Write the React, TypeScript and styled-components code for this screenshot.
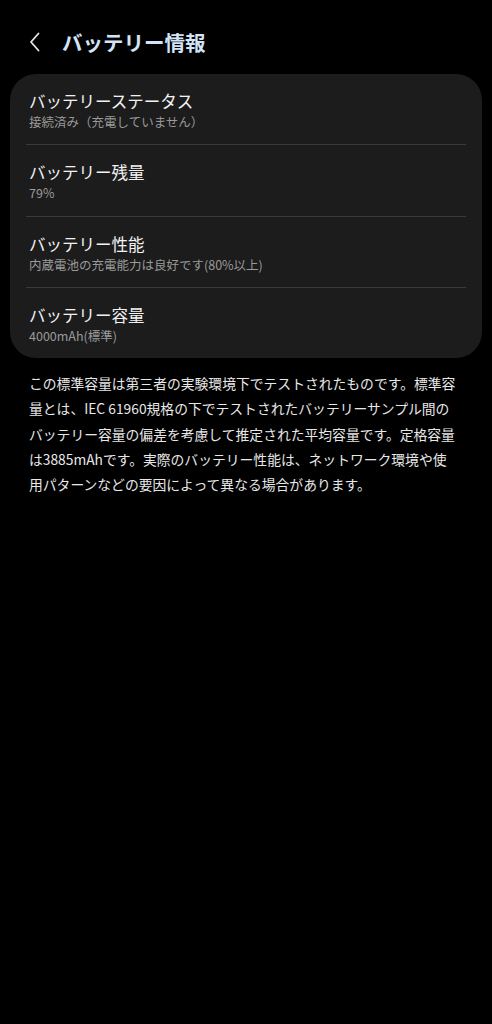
import * as React from 'react';
import styled, {createGlobalStyle} from 'styled-components';

const GlobalStyle = createGlobalStyle`
    html, body {
        margin: 0;
        padding: 0;
        background: #000000;
    }
    body {
        font-family: 'Noto Sans CJK JP', 'Noto Sans', sans-serif;
        -webkit-font-smoothing: antialiased;
    }
`;

interface InfoItem {
    title: string;
    value: string;
}

const items: InfoItem[] = [
    {title: 'バッテリーステータス', value: '接続済み（充電していません）'},
    {title: 'バッテリー残量', value: '79%'},
    {title: 'バッテリー性能', value: '内蔵電池の充電能力は良好です(80%以上)'},
    {title: 'バッテリー容量', value: '4000mAh(標準)'},
];

const BackIcon = () => (
    <svg width="14" height="20" viewBox="0 0 14 20" fill="none">
        <path d="M10.5 1.5 L3 10 L10.5 18.5" stroke="#e4e8ee" strokeWidth="1.8" strokeLinecap="round" strokeLinejoin="round" />
    </svg>
);

const App = () => {
    return (
        <Page>
            <GlobalStyle />
            <Header>
                <BackButton>
                    <BackIcon />
                </BackButton>
                <Title>バッテリー情報</Title>
            </Header>
            <Card>
                {items.map((it, i) => (
                    <React.Fragment key={it.title}>
                        {i > 0 && <Divider />}
                        <Row>
                            <RowTitle>{it.title}</RowTitle>
                            <RowValue>{it.value}</RowValue>
                        </Row>
                    </React.Fragment>
                ))}
            </Card>
            <Note>
                この標準容量は第三者の実験環境下でテストされたものです。標準容量とは、IEC 61960規格の下でテストされたバッテリーサンプル間のバッテリー容量の偏差を考慮して推定された平均容量です。定格容量は3885mAhです。実際のバッテリー性能は、ネットワーク環境や使用パターンなどの要因によって異なる場合があります。
            </Note>
        </Page>
    );
};

const Page = styled.div`
    width: 492px;
    min-height: 1024px;
    background: #000000;
    display: flex;
    flex-direction: column;
`;

const Header = styled.div`
    height: 74px;
    display: flex;
    align-items: center;
    padding: 10px 0 0 28px;
    box-sizing: border-box;
`;

const BackButton = styled.div`
    width: 20px;
    height: 24px;
    display: flex;
    align-items: center;
    margin-right: 14px;
`;

const Title = styled.h1`
    margin: 0;
    font-size: 20.5px;
    font-weight: 700;
    color: #d3e4f8;
    letter-spacing: 0;
`;

const Card = styled.div`
    margin: 0 10px;
    background: #1c1c1c;
    border-radius: 26px;
    padding: 0 16px;
    display: flex;
    flex-direction: column;
`;

const Row = styled.div`
    height: 70.3px;
    padding: 3px 3px 0;
    display: flex;
    flex-direction: column;
    justify-content: center;
    box-sizing: border-box;
`;

const RowTitle = styled.div`
    font-size: 16.5px;
    line-height: 23px;
    color: #f2f2f2;
`;

const RowValue = styled.div`
    font-size: 12.5px;
    line-height: 18px;
    color: #9a9a9a;
`;

const Divider = styled.div`
    height: 1px;
    background: #393939;
`;

const Note = styled.p`
    margin: 0;
    padding: 13px 32px 0 29px;
    font-size: 13.8px;
    line-height: 25.2px;
    color: #e8e8e8;
`;

export default App;
